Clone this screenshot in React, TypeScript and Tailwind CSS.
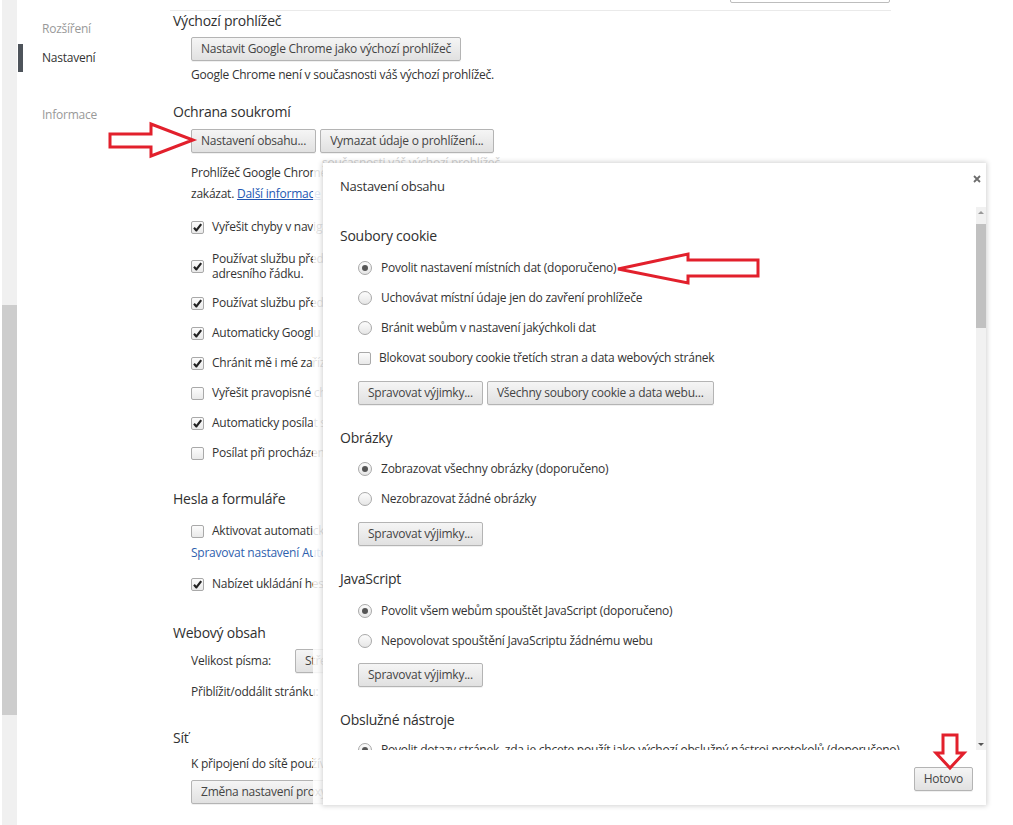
import React from "react";
import clsx from "clsx";

// Chrome-style push button
function Btn({ children, className }: { children: React.ReactNode; className?: string }) {
  return (
    <div
      className={clsx(
        "h-[24px] px-[9px] flex items-center shrink-0 border border-[#b4b4b4] rounded-[2px] bg-gradient-to-b from-[#f5f5f5] to-[#e1e1e1] text-[#444] whitespace-nowrap shadow-[0_1px_0_rgba(0,0,0,0.06)]",
        className
      )}
    >
      {children}
    </div>
  );
}

function Checkbox({ checked }: { checked?: boolean }) {
  return (
    <div className="w-[13px] h-[13px] shrink-0 rounded-[2px] border border-[#a9a9a9] bg-gradient-to-b from-[#fcfcfc] to-[#e9e9e9] flex items-center justify-center">
      {checked && (
        <svg width="11" height="11" viewBox="0 0 11 11">
          <path d="M2 5.8 L4.4 8.4 L9.2 2.2" fill="none" stroke="#222" strokeWidth="2.2" strokeLinejoin="round" />
        </svg>
      )}
    </div>
  );
}

function Radio({ checked }: { checked?: boolean }) {
  return (
    <div className="w-[14px] h-[14px] shrink-0 rounded-full border border-[#a9a9a9] bg-gradient-to-b from-[#fcfcfc] to-[#e6e6e6] flex items-center justify-center">
      {checked && <div className="w-[6px] h-[6px] rounded-full bg-[#555]" />}
    </div>
  );
}

function CheckRow({ checked, children }: { checked?: boolean; children: React.ReactNode }) {
  return (
    <div className="h-[30px] pl-[18px] flex items-center gap-[8px] whitespace-nowrap">
      <Checkbox checked={checked} />
      <span>{children}</span>
    </div>
  );
}

function RadioRow({ checked, children }: { checked?: boolean; children: React.ReactNode }) {
  return (
    <div className="h-[30px] pl-[18px] flex items-center gap-[9px] whitespace-nowrap">
      <Radio checked={checked} />
      <span>{children}</span>
    </div>
  );
}

function Heading({ children, className }: { children: React.ReactNode; className?: string }) {
  return <div className={clsx("h-[20px] flex items-center text-[14px] text-[#303030] whitespace-nowrap", className)}>{children}</div>;
}

export default function App() {
  return (
    <div className="relative w-[1013px] h-[825px] overflow-hidden bg-white flex font-['Open_Sans',sans-serif] text-[12px] tracking-[-0.02em] text-[#333]">
      {/* Page scrollbar */}
      <div className="w-[17px] shrink-0 pl-[2px]">
        <div className="h-full bg-[#f0f0f0]">
          <div className="h-[305px]" />
          <div className="h-[410px] bg-[#cdcdcd]" />
        </div>
      </div>

      {/* Sidebar */}
      <aside className="w-[153px] shrink-0 pt-[20px]">
        <div className="h-[18px] pl-[25px] flex items-center text-[#999]">Rozšíření</div>
        <div className="h-[28px] mt-[6px] flex items-center">
          <div className="w-[5px] h-full ml-[1px] bg-[#4e545b]" />
          <span className="pl-[19px] text-[#333]">Nastavení</span>
        </div>
        <div className="h-[18px] mt-[34px] pl-[25px] flex items-center text-[#999]">Informace</div>
      </aside>

      {/* Main settings column */}
      <main className="w-[721px] shrink-0 overflow-hidden">
        <div className="h-[11px] border-b border-[#eaeaea] flex justify-end pr-[1px]">
          <div className="w-[160px] h-[4px] -mt-[1px] border border-[#bdbdbd] rounded-b-[2px]" />
        </div>
        <div className="pl-[3px]">
          <Heading className="-mt-[1px]">Výchozí prohlížeč</Heading>
          <div className="pl-[18px] mt-[7px] flex">
            <Btn>Nastavit Google Chrome jako výchozí prohlížeč</Btn>
          </div>
          <div className="pl-[18px] mt-[5px] h-[18px] flex items-center whitespace-nowrap">
            Google Chrome není v současnosti váš výchozí prohlížeč.
          </div>

          <Heading className="mt-[17px]">Ochrana soukromí</Heading>
          <div className="pl-[18px] mt-[8px] flex gap-[4px]">
            <Btn>Nastavení obsahu...</Btn>
            <Btn>Vymazat údaje o prohlížení...</Btn>
          </div>
          <div className="pl-[18px] mt-[9px] leading-[21px] whitespace-nowrap">
            <div>Prohlížeč Google Chrome může používat webové služby ke zlepšení prohlížení. Tyto služby můžete volitelně</div>
            <div>
              zakázat. <span className="text-[#2458b3] underline">Další informace</span>
            </div>
          </div>
          <div className="mt-[8px]">
            <CheckRow checked>Vyřešit chyby v navigaci pomocí webové služby</CheckRow>
            <div className="pl-[18px] pt-[9px] pb-[7px] flex items-center gap-[8px] whitespace-nowrap leading-[15px]">
              <Checkbox checked />
              <div>
                <div>Používat službu předpovědí k dokončování vyhledávacích dotazů a adres URL zadaných do</div>
                <div>adresního řádku.</div>
              </div>
            </div>
            <CheckRow checked>Používat službu předpovědí k rychlejšímu načítání stránek</CheckRow>
            <CheckRow checked>Automaticky Googlu odesílat některé informace o systému a obsahu stránek</CheckRow>
            <CheckRow checked>Chránit mě i mé zařízení před nebezpečnými weby</CheckRow>
            <CheckRow>Vyřešit pravopisné chyby pomocí webové služby</CheckRow>
            <CheckRow checked>Automaticky posílat statistiky využití a zprávy o selhání do Googlu</CheckRow>
            <CheckRow>Posílat při procházení požadavek Do Not Track</CheckRow>
          </div>

          <Heading className="mt-[20px]">Hesla a formuláře</Heading>
          <div className="mt-[10px] h-[26px] pl-[18px] flex items-center gap-[8px] whitespace-nowrap">
            <Checkbox />
            <span>Aktivovat automatické vyplňování formulářů jedním kliknutím</span>
          </div>
          <div className="pl-[18px] h-[18px] flex items-center text-[#2f5fae] whitespace-nowrap">
            Spravovat nastavení Automatického vyplňování
          </div>
          <div className="mt-[7px]">
            <CheckRow checked>Nabízet ukládání hesel zadaných na webu</CheckRow>
          </div>

          <Heading className="mt-[23px]">Webový obsah</Heading>
          <div className="pl-[18px] mt-[7px] flex items-center whitespace-nowrap">
            <span className="w-[104px]">Velikost písma:</span>
            <Btn className="w-[120px]">Střední</Btn>
          </div>
          <div className="pl-[18px] mt-[10px] h-[18px] flex items-center whitespace-nowrap">
            Přiblížit/oddálit stránku:
          </div>

          <Heading className="mt-[26px]">Síť</Heading>
          <div className="pl-[18px] mt-[8px] h-[18px] flex items-center whitespace-nowrap">
            K připojení do sítě používá Google Chrome systémové nastavení proxy serveru počítače.
          </div>
          <div className="pl-[18px] mt-[7px] flex">
            <Btn>Změna nastavení proxy serveru...</Btn>
          </div>
        </div>
      </main>

      {/* Faded overlay behind the dialog */}
      <div className="absolute left-[313px] top-[156px] w-[680px] h-[660px] bg-white/85">
        <div className="pl-[9px] h-[14px] flex items-center text-[#d2d2d2] whitespace-nowrap">současnosti váš výchozí prohlížeč</div>
      </div>

      {/* Content settings dialog */}
      <div className="absolute left-[323px] top-[163px] w-[663px] h-[642px] bg-white shadow-[0_0_5px_1px_rgba(0,0,0,0.18)] flex flex-col">
        <div className="relative h-[44px] shrink-0 pt-[14px] pl-[17px]">
          <div className="h-[20px] flex items-center text-[13px] text-[#333]">Nastavení obsahu</div>
          <svg className="absolute right-[5px] top-[12px]" width="8" height="8" viewBox="0 0 8 8">
            <path d="M1 1 L7 7 M7 1 L1 7" stroke="#6d6d6d" strokeWidth="1.8" />
          </svg>
        </div>

        <div className="h-[543px] shrink-0 flex overflow-hidden">
          <div className="flex-1 pl-[17px] overflow-hidden">
            <Heading className="mt-[18px]">Soubory cookie</Heading>
            <div className="mt-[8px]">
              <RadioRow checked>Povolit nastavení místních dat (doporučeno)</RadioRow>
              <RadioRow>Uchovávat místní údaje jen do zavření prohlížeče</RadioRow>
              <RadioRow>Bránit webům v nastavení jakýchkoli dat</RadioRow>
              <div className="h-[30px] pl-[18px] flex items-center gap-[8px] whitespace-nowrap">
                <Checkbox />
                <span>Blokovat soubory cookie třetích stran a data webových stránek</span>
              </div>
            </div>
            <div className="pl-[18px] mt-[8px] flex gap-[4px]">
              <Btn>Spravovat výjimky...</Btn>
              <Btn>Všechny soubory cookie a data webu...</Btn>
            </div>

            <Heading className="mt-[22px]">Obrázky</Heading>
            <div className="mt-[7px]">
              <RadioRow checked>Zobrazovat všechny obrázky (doporučeno)</RadioRow>
              <RadioRow>Nezobrazovat žádné obrázky</RadioRow>
            </div>
            <div className="pl-[18px] mt-[8px] flex">
              <Btn>Spravovat výjimky...</Btn>
            </div>

            <Heading className="mt-[22px]">JavaScript</Heading>
            <div className="mt-[8px]">
              <RadioRow checked>Povolit všem webům spouštět JavaScript (doporučeno)</RadioRow>
              <RadioRow>Nepovolovat spouštění JavaScriptu žádnému webu</RadioRow>
            </div>
            <div className="pl-[18px] mt-[7px] flex">
              <Btn>Spravovat výjimky...</Btn>
            </div>

            <Heading className="mt-[22px]">Obslužné nástroje</Heading>
            <div className="mt-[6px]">
              <RadioRow checked>Povolit dotazy stránek, zda je chcete použít jako výchozí obslužný nástroj protokolů (doporučeno)</RadioRow>
            </div>
          </div>

          {/* Dialog scrollbar */}
          <div className="w-[10px] shrink-0 bg-[#f1f1f1] flex flex-col items-center">
            <div className="h-[10px] flex items-center">
              <div className="w-0 h-0 border-l-[3px] border-r-[3px] border-b-[3px] border-l-transparent border-r-transparent border-b-[#999]" />
            </div>
            <div className="w-full h-[104px] mt-[7px] bg-[#c1c1c1]" />
            <div className="flex-1" />
            <div className="h-[12px] flex items-center">
              <div className="w-0 h-0 border-l-[3px] border-r-[3px] border-t-[3px] border-l-transparent border-r-transparent border-t-[#555]" />
            </div>
          </div>
        </div>

        <div className="flex-1 flex justify-end items-start pt-[17px] pr-[13px]">
          <Btn>Hotovo</Btn>
        </div>
      </div>

      {/* Red annotation arrows */}
      <svg className="absolute left-0 top-0 pointer-events-none" width="1013" height="825">
        <g fill="none" stroke="#e2202c" strokeWidth="3" strokeLinejoin="miter">
          <polygon points="110,134 151,134 151,124 193,140 151,156 151,147 110,147" />
          <polygon points="618,269 688,254 688,260 758,260 758,276 688,276 688,283" />
          <polygon points="943,735 957,735 957,753 964,753 950,768 936,753 943,753" />
        </g>
      </svg>
    </div>
  );
}
